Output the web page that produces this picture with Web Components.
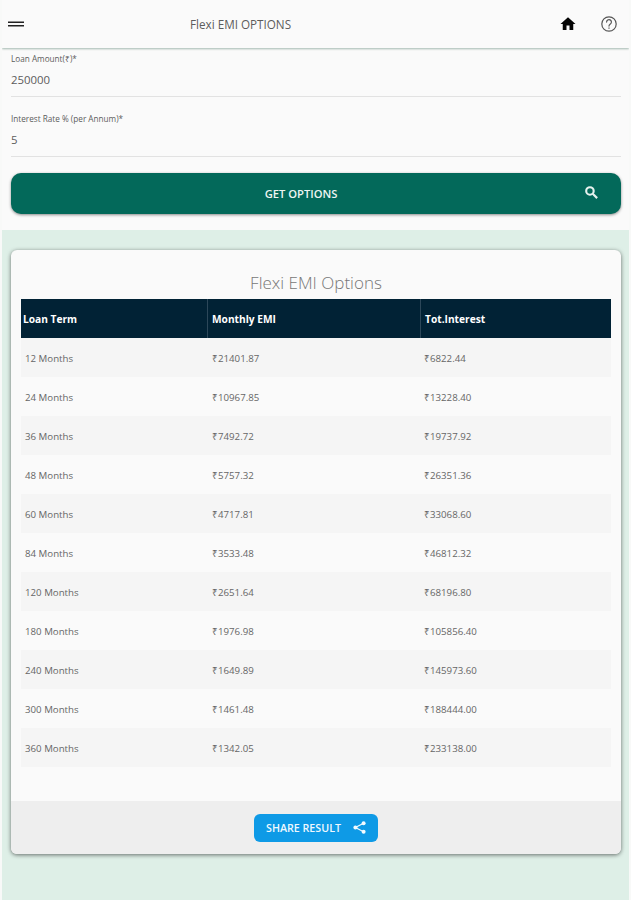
<!DOCTYPE html>
<html>
<head>
<meta charset="utf-8">
<title>Flexi EMI Options</title>
<style>
    html, body { margin: 0; padding: 0; }
    body {
        height: 900px;
        box-sizing: border-box;
        overflow: hidden;
        background: #deefe7;
        border-left: 2px solid #f8f9f8;
        border-right: 2px solid #f8f9f8;
        font-family: "Open Sans", "Liberation Sans", sans-serif;
    }
</style>
</head>
<body>
<emi-appbar title="Flexi EMI OPTIONS"></emi-appbar>
<emi-form>
    <emi-field label="Loan Amount(₹)*" value="250000"></emi-field>
    <emi-field label="Interest Rate % (per Annum)*" value="5"></emi-field>
</emi-form>
<emi-results></emi-results>

<script>
const appbarTemplate = document.createElement('template');
appbarTemplate.innerHTML = `
    <style>
        :host {
            display: flex;
            align-items: center;
            position: relative;
            z-index: 2;
            height: 48px;
            box-sizing: border-box;
            padding: 0 11px 1px 6px;
            background: #fafafa;
            box-shadow: 0 1px 2px #a2b8af;
        }
        .menu { width: 16px; height: 16px; }
        h1 {
            margin: 0 0 0 166px;
            flex: 1;
            font-size: 11.7px;
            font-weight: 400;
            color: #5c5c5c;
        }
        svg { display: block; }
        .home { margin-right: 23px; }
    </style>
    <svg class="menu" viewBox="0 0 16 16"><path d="M0 5.5h16v1.6H0zM0 9h16v1.6H0z" fill="#222"/></svg>
    <h1></h1>
    <svg class="home" width="18" height="18" viewBox="0 0 24 24"><path d="M10 20v-6h4v6h5v-8h3L12 3 2 12h3v8z" fill="#050505"/></svg>
    <svg width="18" height="18" viewBox="0 0 24 24" fill="none" stroke="#555" stroke-width="1.6">
        <circle cx="12" cy="12" r="9.6"/>
        <path d="M8.8 9.4a3.2 3.2 0 1 1 5 2.6c-1.1.8-1.8 1.4-1.8 2.8" stroke-linecap="round"/>
        <path d="M12 16.6v1.8"/>
    </svg>
`;
class EmiAppbar extends HTMLElement{
    constructor(){
        super();
        this.shadow = this.attachShadow({mode: 'open'});
        this.shadow.appendChild( appbarTemplate.content.cloneNode(true) );
    }
    connectedCallback(){
        this.shadow.querySelector('h1').textContent = this.getAttribute('title');
    }
}
customElements.define('emi-appbar', EmiAppbar);


// ====================================================================================

const fieldTemplate = document.createElement('template');
fieldTemplate.innerHTML = `
    <style>
        :host {
            display: block;
            height: 48px;
            box-sizing: border-box;
            border-bottom: 1px solid #e2e2e2;
            color: #5c5c5c;
        }
        label {
            display: block;
            font-size: 8.2px;
            line-height: 11px;
            padding-top: 4px;
        }
        div {
            font-size: 11.4px;
            line-height: 16px;
            margin-top: 8px;
        }
    </style>
    <label></label>
    <div></div>
`;
class EmiField extends HTMLElement{
    constructor(){
        super();
        this.shadow = this.attachShadow({mode: 'open'});
        this.shadow.appendChild( fieldTemplate.content.cloneNode(true) );
    }
    connectedCallback(){
        this.shadow.querySelector('label').textContent = this.getAttribute('label');
        this.shadow.querySelector('div').textContent = this.getAttribute('value');
    }
}
customElements.define('emi-field', EmiField);


const formTemplate = document.createElement('template');
formTemplate.innerHTML = `
    <style>
        :host {
            display: block;
            height: 182px;
            box-sizing: border-box;
            padding: 1px 8px 0 9px;
            background: #fafafa;
        }
        .fields {
            display: flex;
            flex-direction: column;
            gap: 12px;
        }
        button {
            display: flex;
            align-items: center;
            justify-content: center;
            position: relative;
            width: 100%;
            height: 41px;
            margin-top: 16px;
            padding: 0 30px 0 0;
            border: 0;
            border-radius: 10px;
            background: #03695a;
            color: #eef5f2;
            font: 600 11.2px "Open Sans", "Liberation Sans", sans-serif;
            box-shadow: 0 1px 3px rgba(0, 0, 0, 0.45);
        }
        svg { position: absolute; right: 22px; top: 12px; }
    </style>
    <div class="fields"><slot></slot></div>
    <button type="button">GET OPTIONS
        <svg width="15" height="15" viewBox="0 0 24 24"><circle cx="9.5" cy="9.5" r="6" fill="none" stroke="#e6f2ee" stroke-width="3.4"/><path d="M14 14l7 7" stroke="#e6f2ee" stroke-width="3.4"/></svg>
    </button>
`;
class EmiForm extends HTMLElement{
    constructor(){
        super();
        this.shadow = this.attachShadow({mode: 'open'});
        this.shadow.appendChild( formTemplate.content.cloneNode(true) );
    }
}
customElements.define('emi-form', EmiForm);


// ====================================================================================

const resultRows = [
    ['12 Months', '₹21401.87', '₹6822.44'],
    ['24 Months', '₹10967.85', '₹13228.40'],
    ['36 Months', '₹7492.72', '₹19737.92'],
    ['48 Months', '₹5757.32', '₹26351.36'],
    ['60 Months', '₹4717.81', '₹33068.60'],
    ['84 Months', '₹3533.48', '₹46812.32'],
    ['120 Months', '₹2651.64', '₹68196.80'],
    ['180 Months', '₹1976.98', '₹105856.40'],
    ['240 Months', '₹1649.89', '₹145973.60'],
    ['300 Months', '₹1461.48', '₹188444.00'],
    ['360 Months', '₹1342.05', '₹233138.00']
];

const resultsTemplate = document.createElement('template');
resultsTemplate.innerHTML = `
    <style>
        :host {
            display: block;
            padding: 20px 8px 0 9px;
        }
        .card {
            height: 604px;
            display: flex;
            flex-direction: column;
            background: #fafafa;
            border-radius: 6px;
            overflow: hidden;
            box-shadow: 0 1px 4px rgba(0, 0, 0, 0.55);
        }
        .body { flex: 1; padding: 0 10px; }
        h2 {
            margin: 0;
            height: 49px;
            line-height: 65px;
            text-align: center;
            font-size: 17px;
            font-weight: 300;
            color: #777;
        }
        .row {
            display: grid;
            grid-template-columns: 186px 212px 1fr;
            height: 39px;
            box-sizing: border-box;
            padding-top: 2px;
            align-items: center;
            font-size: 9.7px;
            color: #666;
        }
        .row:nth-child(odd) { background: #f5f5f5; }
        .row span { padding-left: 5px; }
        .row span:first-child { padding-left: 4px; }
        .head {
            display: grid;
            grid-template-columns: 187px 213px 1fr;
            height: 39px;
            background: #012235;
            color: #fff;
            font-size: 10.2px;
            font-weight: 700;
        }
        .head span {
            display: flex;
            align-items: center;
            padding-left: 4px;
            border-right: 1px solid #2c4759;
        }
        .head span:first-child { padding-left: 2px; }
        .head span:last-child { border-right: 0; }
        .foot {
            height: 53px;
            display: flex;
            align-items: center;
            justify-content: center;
            background: #eeeeee;
        }
        button {
            display: flex;
            align-items: center;
            justify-content: center;
            gap: 12px;
            width: 124px;
            height: 28px;
            padding: 0;
            border: 0;
            border-radius: 6px;
            background: #0e9ae6;
            color: #eef8fe;
            font: 600 10.7px "Open Sans", "Liberation Sans", sans-serif;
        }
    </style>
    <div class="card">
        <div class="body">
            <h2>Flexi EMI Options</h2>
            <div class="head"><span>Loan Term</span><span>Monthly EMI</span><span>Tot.Interest</span></div>
            <div class="rows"></div>
        </div>
        <div class="foot">
            <button type="button">SHARE RESULT
                <svg width="13" height="13" viewBox="0 0 13 13"><g fill="#f4fbff"><circle cx="10.6" cy="2.3" r="2"/><circle cx="2.4" cy="6.5" r="2"/><circle cx="10.6" cy="10.7" r="2"/></g><path d="M10.6 2.3L2.4 6.5l8.2 4.2" fill="none" stroke="#f4fbff" stroke-width="1.2"/></svg>
            </button>
        </div>
    </div>
`;
class EmiResults extends HTMLElement{
    constructor(){
        super();
        this.shadow = this.attachShadow({mode: 'open'});
        this.shadow.appendChild( resultsTemplate.content.cloneNode(true) );
    }
    connectedCallback(){
        const rows = this.shadow.querySelector('.rows');
        resultRows.forEach(r => {
            const row = document.createElement('div');
            row.className = 'row';
            r.forEach(text => {
                const cell = document.createElement('span');
                cell.textContent = text;
                row.appendChild(cell);
            });
            rows.appendChild(row);
        });
    }
}
customElements.define('emi-results', EmiResults);
</script>
</body>
</html>
